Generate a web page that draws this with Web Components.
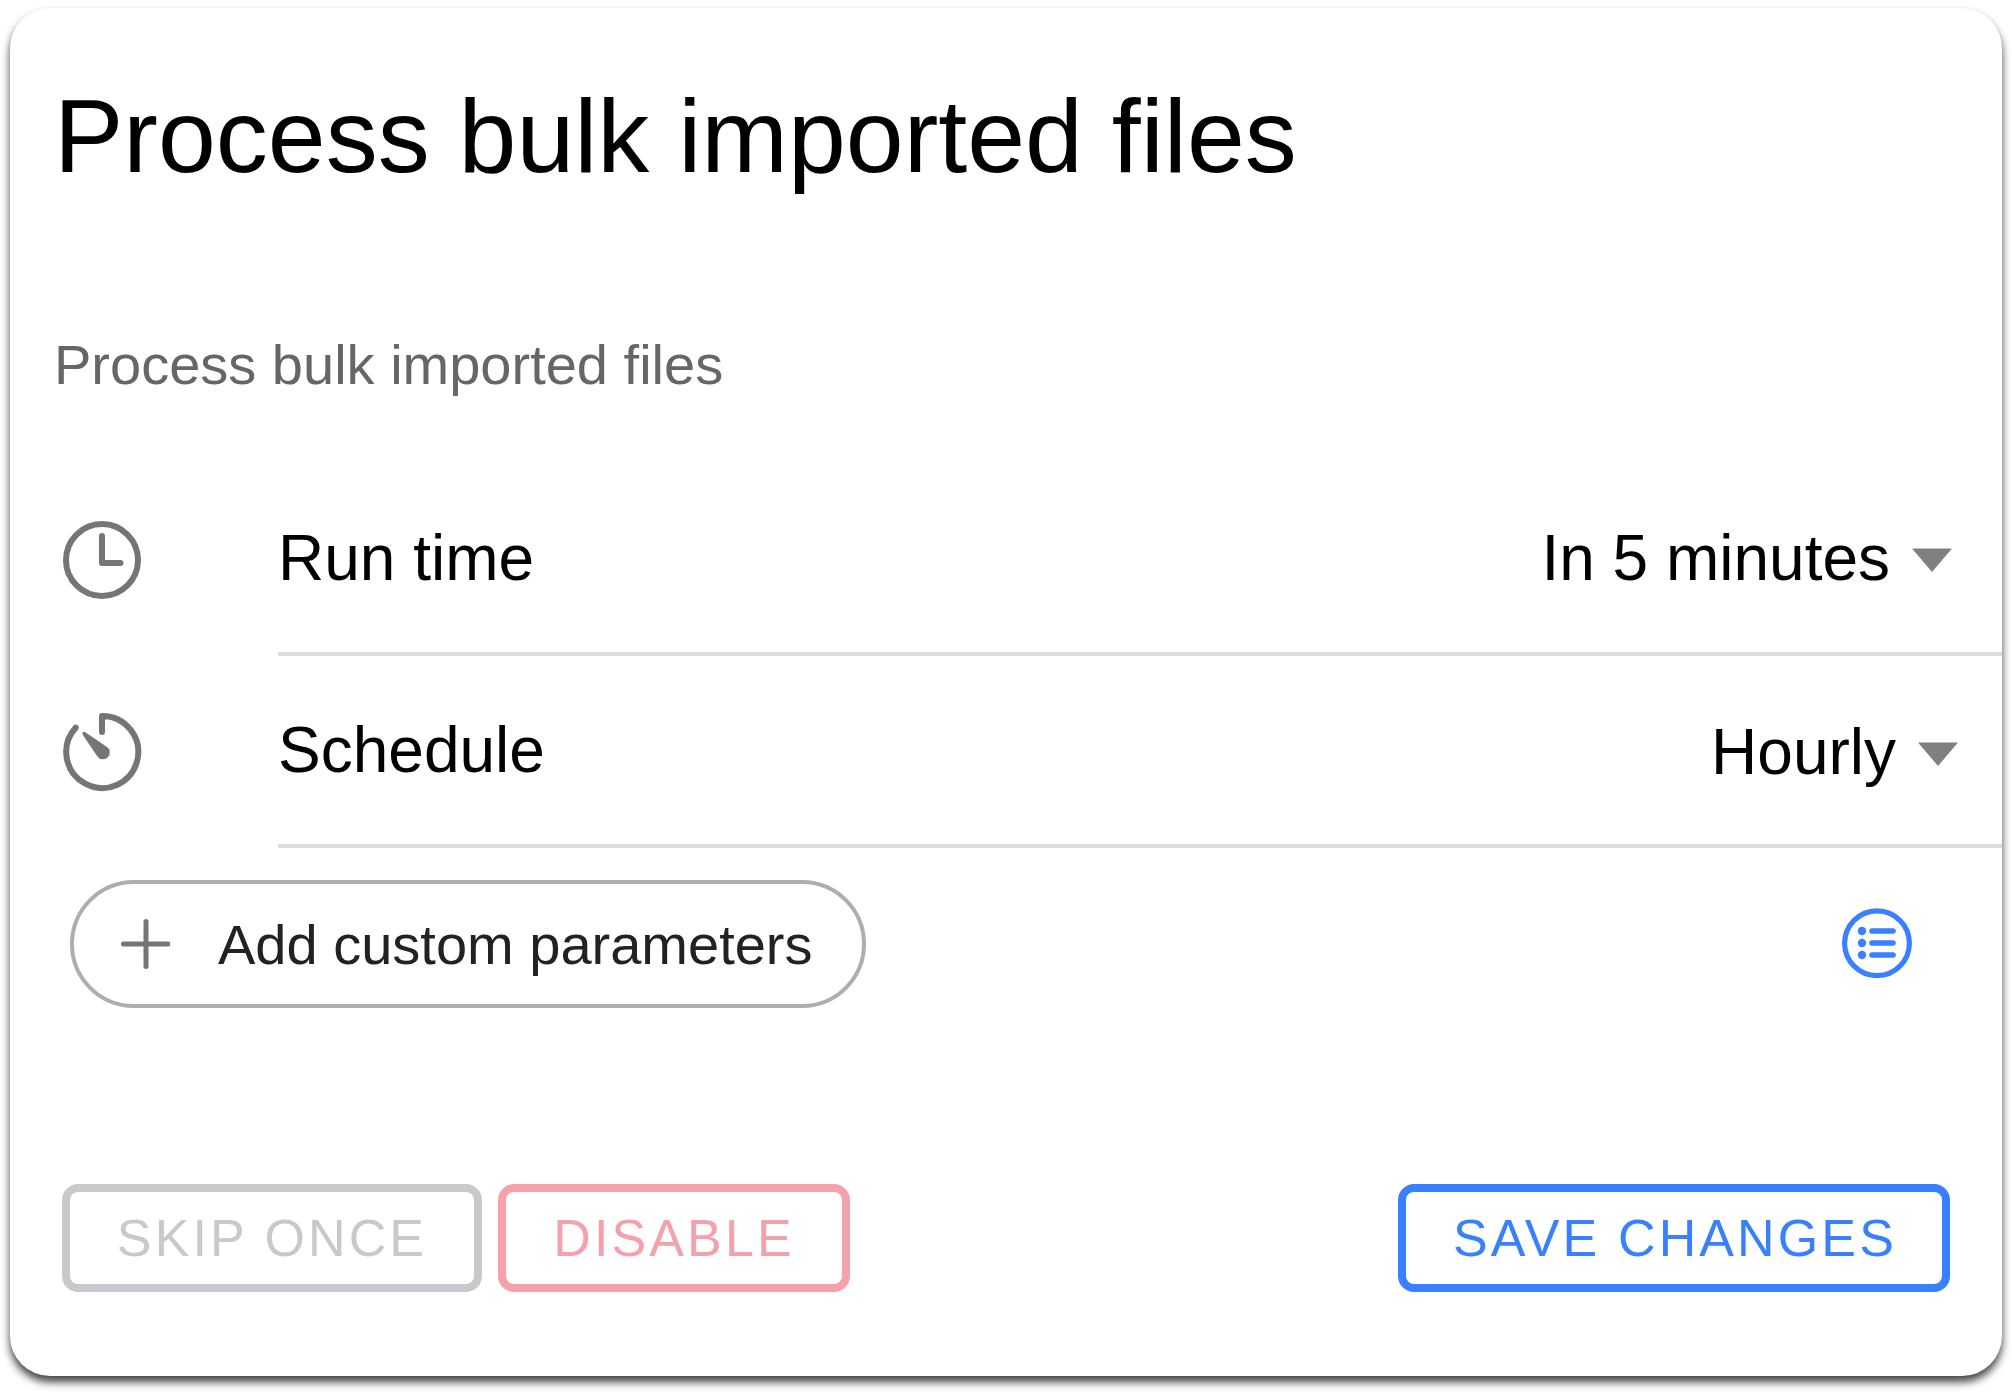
<!DOCTYPE html>
<html lang="en">
<head>
<meta charset="utf-8">
<title>Task settings</title>
<style>
html, body { margin: 0; background: #fff; }
body { width: 2012px; height: 1392px; overflow: hidden; font-family: "Liberation Sans", Arial, sans-serif; color: #000; }
</style>
</head>
<body>
<task-card>
  <span slot="title">Process bulk imported files</span>
  <span slot="subtitle">Process bulk imported files</span>
  <setting-row value="In 5 minutes" style="--end:50px">
    <task-icon slot="icon" name="clock"></task-icon>Run time
  </setting-row>
  <setting-row value="Hourly" style="--end:44px;--drop:2px">
    <task-icon slot="icon" name="timer"></task-icon>Schedule
  </setting-row>
  <param-chip slot="tools">Add custom parameters</param-chip>
  <task-icon slot="tools" name="list"></task-icon>
  <action-button slot="start" style="--w:420px;--c:#c8c9cd">SKIP ONCE</action-button>
  <action-button slot="start" style="--w:352px;--c:#f5a1ac">DISABLE</action-button>
  <action-button slot="end" style="--w:552px;--c:#3880ff;--nudge:2px">SAVE CHANGES</action-button>
</task-card>
<script>
class Base extends HTMLElement {
  connectedCallback() {
    if (!this.shadowRoot) this.attachShadow({ mode: "open" }).innerHTML = this.render();
  }
}

customElements.define("task-icon", class extends Base {
  render() {
    const icons = {
      clock: `<svg width="80" height="80" viewBox="0 0 80 80" fill="none" stroke="#757575" stroke-width="6" stroke-linecap="round" stroke-linejoin="round"><circle cx="40" cy="40" r="36"/><path d="M40 16V43H58.5"/></svg>`,
      timer: `<svg width="80" height="80" viewBox="0 0 80 80" fill="none" stroke="#757575" stroke-width="6" stroke-linecap="round" stroke-linejoin="round"><path d="M40 20V4A36 36 0 1 1 13.8 15.6"/><path d="M23.3 20.2L44.3 34.6A6.8 6.8 0 1 1 35.4 44.4L20.9 23C19.6 20.8 21.4 18.9 23.3 20.2Z" fill="#757575" stroke="none"/></svg>`,
      list: `<svg width="72" height="72" viewBox="0 0 72 72" fill="none" stroke="#3880ff" stroke-width="5.6" stroke-linecap="round"><circle cx="36" cy="35.3" r="32.4" stroke-width="5.2"/><path d="M31 23H52M31 35H52M31 47H52"/><g fill="#3880ff" stroke="none"><circle cx="21" cy="23" r="4.2"/><circle cx="21" cy="35" r="4.2"/><circle cx="21" cy="47" r="4.2"/></g></svg>`
    };
    return `<style>:host{display:block;flex:none}svg{display:block}</style>${icons[this.getAttribute("name")]}`;
  }
});

customElements.define("setting-row", class extends Base {
  render() {
    return `<style>
      :host{display:flex;height:192px;padding-left:52px;font-size:64px;line-height:72px;white-space:nowrap}
      .icon{width:216px;padding-top:56px}
      .main{flex:1;display:flex;align-items:flex-start;justify-content:space-between;box-sizing:border-box;border-bottom:4px solid #dedede;padding-top:58px;padding-right:var(--end)}
      .value{display:flex;gap:22px;padding-top:var(--drop,0)}
      svg{display:block;margin-top:26px}
    </style>
    <div class="icon"><slot name="icon"></slot></div>
    <div class="main"><div><slot></slot></div>
      <div class="value"><span>${this.getAttribute("value")}</span><svg width="40" height="24" viewBox="0 0 40 24"><path d="M0 .5H40L20 24Z" fill="#808080"/></svg></div>
    </div>`;
  }
});

customElements.define("param-chip", class extends Base {
  render() {
    return `<style>
      :host{display:flex;align-items:center;gap:48px;box-sizing:border-box;width:796px;height:128px;padding-left:47px;border:4px solid #aeaeae;border-radius:64px;font-size:56px;line-height:64px;color:#222;white-space:nowrap}
      svg{display:block}
      span{padding-top:2px}
    </style><svg width="49" height="50" viewBox="0 0 49 50" stroke="#757575" stroke-width="5" stroke-linecap="round"><path d="M2.5 25H47M25 2.5V47.5"/></svg><span><slot></slot></span>`;
  }
});

customElements.define("action-button", class extends Base {
  render() {
    return `<style>
      :host{display:block;width:var(--w)}
      button{display:flex;align-items:center;justify-content:center;box-sizing:border-box;width:100%;height:108px;margin:0;padding:0 0 0 var(--nudge,0);border:8px solid var(--c);border-radius:16px;background:none;color:var(--c);font:52px/60px "Liberation Sans",Arial,sans-serif;letter-spacing:3.12px;white-space:nowrap}
    </style><button><span><slot></slot></span></button>`;
  }
});

customElements.define("task-card", class extends Base {
  render() {
    return `<style>
      :host{display:flex;flex-direction:column;box-sizing:border-box;width:1992px;height:1368px;margin:8px 10px;border-radius:40px;background:#fff;box-shadow:0 6px 9px rgba(0,0,0,.74)}
      h1{margin:0;padding:68px 44px 0;font-size:104px;line-height:120px;font-weight:400}
      p{margin:0;padding:137px 44px 0;height:64px;font-size:56px;line-height:64px;color:#666}
      .rows{padding-top:67px}
      .tools{display:flex;align-items:center;justify-content:space-between;margin-top:32px;padding:0 89px 0 60px;height:128px}
      .actions{display:flex;justify-content:space-between;padding:176px 52px 0}
      .start{display:flex;gap:16px}
    </style>
    <h1><slot name="title"></slot></h1>
    <p><slot name="subtitle"></slot></p>
    <div class="rows"><slot></slot></div>
    <div class="tools"><slot name="tools"></slot></div>
    <div class="actions"><div class="start"><slot name="start"></slot></div><slot name="end"></slot></div>`;
  }
});
</script>
</body>
</html>
